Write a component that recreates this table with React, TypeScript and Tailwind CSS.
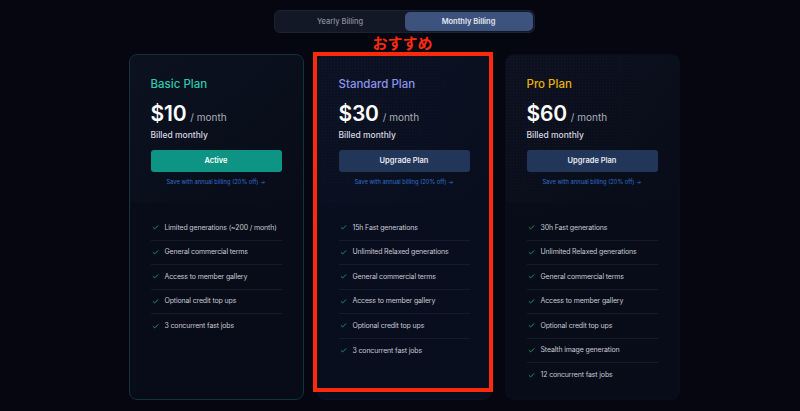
import React from 'react';
import { Check } from 'lucide-react';

type Plan = {
  name: string;
  price: string;
  titleClass: string;
  buttonLabel: string;
  buttonClass: string;
  cardClass: string;
  dots?: string;
  features: string[];
};

const plans: Plan[] = [
  {
    name: 'Basic Plan',
    price: '$10',
    titleClass: 'text-[#2cc9b0]',
    buttonLabel: 'Active',
    buttonClass: 'bg-[#0e9484] text-white',
    cardClass: 'border-[#12343a] bg-[#080c18]',
    features: [
      'Limited generations (~200 / month)',
      'General commercial terms',
      'Access to member gallery',
      'Optional credit top ups',
      '3 concurrent fast jobs',
    ],
  },
  {
    name: 'Standard Plan',
    price: '$30',
    titleClass: 'text-[#8b93f0]',
    buttonLabel: 'Upgrade Plan',
    buttonClass: 'bg-[#22365a] text-[#e6e9f0]',
    cardClass: 'border-[#0c1122] bg-[#090e1e]',
    dots: 'bg-[radial-gradient(circle,rgba(80,110,190,0.35)_0.8px,transparent_1px)]',
    features: [
      '15h Fast generations',
      'Unlimited Relaxed generations',
      'General commercial terms',
      'Access to member gallery',
      'Optional credit top ups',
      '3 concurrent fast jobs',
    ],
  },
  {
    name: 'Pro Plan',
    price: '$60',
    titleClass: 'text-[#eab308]',
    buttonLabel: 'Upgrade Plan',
    buttonClass: 'bg-[#22365a] text-[#e6e9f0]',
    cardClass: 'border-[#0a0e1a] bg-[#080c18]',
    dots: 'bg-[radial-gradient(circle,rgba(170,40,60,0.5)_0.8px,transparent_1px)]',
    features: [
      '30h Fast generations',
      'Unlimited Relaxed generations',
      'General commercial terms',
      'Access to member gallery',
      'Optional credit top ups',
      'Stealth image generation',
      '12 concurrent fast jobs',
    ],
  },
];

const PlanCard: React.FC<{ plan: Plan }> = ({ plan }) => (
  <div className={`relative w-[175px] h-[346px] rounded-[8px] border overflow-hidden ${plan.cardClass}`}>
    {plan.dots && (
      <div
        className={`absolute inset-0 bg-[length:3px_3px] [mask-image:radial-gradient(circle_at_0%_0%,black,transparent_45%)] ${plan.dots}`}
      />
    )}
    {/* header */}
    <div className="relative px-[21px] pt-[21px] pb-[16px] h-[148px] bg-gradient-to-br from-[#0c1322]/80 to-transparent">
      <div className={`text-[11.5px] leading-[16px] font-medium ${plan.titleClass}`}>{plan.name}</div>
      <div className="flex items-baseline mt-[8px] h-[28px]">
        <span className="text-[21px] leading-[28px] font-semibold text-white tracking-[-0.2px]">{plan.price}</span>
        <span className="ml-[4px] text-[10px] text-[#a9aebb]">/ month</span>
      </div>
      <div className="text-[8.5px] leading-[12px] mt-[1px] font-medium text-[#d6d9e0]">Billed monthly</div>
      <button
        className={`mt-[9px] w-[131px] h-[22px] rounded-[3px] text-[7.5px] font-semibold flex items-center justify-center ${plan.buttonClass}`}
      >
        {plan.buttonLabel}
      </button>
      <div className="mt-[5px] text-[5.8px] leading-[9px] text-center w-[131px] text-[#2f6fd0]">
        Save with annual billing (20% off) →
      </div>
    </div>
    {/* features */}
    <ul className="relative px-[21px] pt-[13px]">
      {plan.features.map((f, i) => (
        <li
          key={i}
          className={`flex items-center h-[24.5px] ${i < plan.features.length - 1 ? 'border-b border-[#161b29]' : ''}`}
        >
          <Check size={7} strokeWidth={3} className="text-[#18a57e] ml-[1px] mr-[6px] shrink-0" />
          <span className="text-[7px] whitespace-nowrap tracking-[-0.15px] text-[#c5c9d2]">{f}</span>
        </li>
      ))}
    </ul>
  </div>
);

export default function App() {
  return (
    <div
      className="w-[800px] h-[411px] bg-[#05060f] overflow-hidden pl-[8px] pt-[10px]"
      style={{ fontFamily: 'Inter, "Noto Sans", "Noto Sans CJK JP", sans-serif' }}
    >
      <div className="flex flex-col items-center">
        {/* Billing toggle */}
        <div className="flex w-[261px] h-[23px] p-[1px] rounded-[6px] bg-[#121826] border border-[#1b2233]">
          <div className="flex-1 flex items-center justify-center text-[7.5px] font-medium text-[#8b909c]">
            Yearly Billing
          </div>
          <div className="w-[128px] flex items-center justify-center rounded-[5px] bg-[#2a3c62] bg-[radial-gradient(circle,rgba(120,150,210,0.25)_0.7px,transparent_1px)] bg-[length:2px_2px] text-[7.5px] font-semibold text-[#e4e8f2]">
            Monthly Billing
          </div>
        </div>

        {/* Cards */}
        <div className="relative mt-[21px] flex gap-[13px]">
          {plans.map((p) => (
            <PlanCard key={p.name} plan={p} />
          ))}
          {/* recommendation annotation */}
          <div className="absolute left-[184px] top-[-2px] w-[180px] h-[340px] border-[4px] border-[#fb2a0c]">
            <div
              className="absolute bottom-full left-0 right-0 mb-[4px] text-center text-[15px] leading-[18px] font-bold text-[#fb2a0c]"
              style={{ fontFamily: '"Noto Sans CJK JP", sans-serif' }}
            >
              おすすめ
            </div>
          </div>
        </div>
      </div>
    </div>
  );
}
